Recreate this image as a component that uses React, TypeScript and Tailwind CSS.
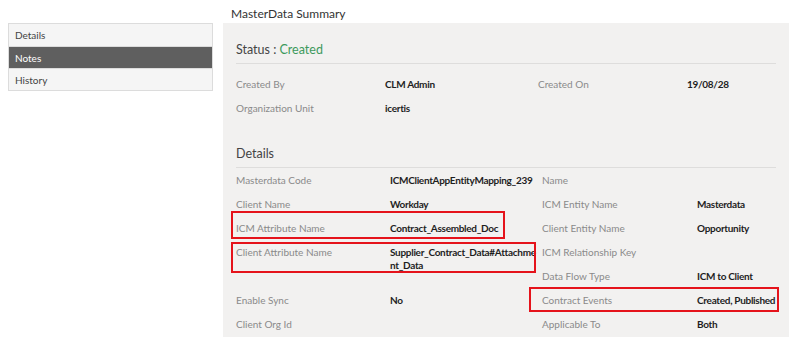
import React from "react";

type Field = { label: string; value?: React.ReactNode };

const sideItems = [
  { name: "Details", active: false },
  { name: "Notes", active: true },
  { name: "History", active: false },
];

const statusLeft: Field[] = [
  { label: "Created By", value: "CLM Admin" },
  { label: "Organization Unit", value: "icertis" },
];
const statusRight: Field[] = [{ label: "Created On", value: "19/08/28" }];

const detailsRight: Field[] = [
  { label: "Name" },
  { label: "ICM Entity Name", value: "Masterdata" },
  { label: "Client Entity Name", value: "Opportunity" },
  { label: "ICM Relationship Key" },
  { label: "Data Flow Type", value: "ICM to Client" },
  { label: "Contract Events", value: "Created, Published" },
  { label: "Applicable To", value: "Both" },
];

function Row({ f, labelW, span }: { f: Field; labelW: string; span?: string }) {
  return (
    <div className={`flex items-start pt-[5px] ${span ?? ""}`}>
      <div className={`${labelW} shrink-0 whitespace-nowrap text-[#8a8a8a]`}>{f.label}</div>
      <div className="whitespace-nowrap pt-[1px] font-bold leading-[13px] tracking-[-0.3px] text-[#1e1e1e]">{f.value}</div>
    </div>
  );
}

export default function App() {
  return (
    <div
      className="relative flex h-[341px] w-[800px] overflow-hidden bg-white text-[10px] leading-[14px]"
      style={{ fontFamily: "Lato, 'Open Sans', sans-serif" }}
    >
      {/* left nav */}
      <div className="w-[223px] shrink-0 pl-2 pr-[10px] pt-[23px]">
        <div className="border border-[#dcdcdc] bg-[#f5f5f5]">
          {sideItems.map((s, i) => (
            <div
              key={s.name}
              className={`flex h-[22px] items-center px-[6px] ${i > 0 ? "border-t border-[#dcdcdc]" : ""} ${
                s.active ? "bg-[#5f5f5f] text-white" : "text-[#444]"
              }`}
            >
              {s.name}
            </div>
          ))}
        </div>
      </div>

      {/* main */}
      <div className="flex w-[566px] shrink-0 flex-col">
        <div className="h-[23px] pl-[8px] pt-[5px] text-[12px] leading-[18px] text-[#333]">MasterData Summary</div>
        <div className="relative h-[314px] bg-[#f2f1f0] px-[13px]">
          <div className="border-b border-[#dedddc] pb-[3px] pt-[17px] text-[12.5px] leading-[20px] text-[#444]">
            Status : <span className="text-[#3d9a5c]">Created</span>
          </div>
          <div className="mt-[8px] grid auto-rows-[24px] grid-cols-[302px_1fr]">
            <Row f={statusLeft[0]} labelW="w-[149px]" />
            <Row f={statusRight[0]} labelW="w-[149px]" />
            <Row f={statusLeft[1]} labelW="w-[149px]" />
          </div>

          <div className="mt-[24px] border-b border-[#dedddc] pb-[3px] text-[12.5px] leading-[20px] text-[#444]">Details</div>
          <div className="mt-0 grid grid-flow-col grid-cols-[306px_1fr] grid-rows-[repeat(7,24px)]">
            <Row f={{ label: "Masterdata Code", value: "ICMClientAppEntityMapping_239" }} labelW="w-[154px]" />
            <Row f={{ label: "Client Name", value: "Workday" }} labelW="w-[154px]" />
            <Row f={{ label: "ICM Attribute Name", value: "Contract_Assembled_Doc" }} labelW="w-[154px]" />
            <Row
              f={{
                label: "Client Attribute Name",
                value: (
                  <>
                    Supplier_Contract_Data#Attachme
                    <br />
                    nt_Data
                  </>
                ),
              }}
              labelW="w-[154px]"
              span="row-span-2"
            />
            <Row f={{ label: "Enable Sync", value: "No" }} labelW="w-[154px]" />
            <Row f={{ label: "Client Org Id" }} labelW="w-[154px]" />
            {detailsRight.map((f) => (
              <Row key={f.label} f={f} labelW="w-[155px]" />
            ))}
          </div>

          {/* red annotation boxes */}
          <div className="pointer-events-none absolute left-[8px] top-[188px] h-[28px] w-[274px] border-2 border-[#e5131b]" />
          <div className="pointer-events-none absolute left-[8px] top-[219px] h-[31px] w-[305px] border-2 border-[#e5131b]" />
          <div className="pointer-events-none absolute left-[306px] top-[264px] h-[25px] w-[250px] border-2 border-[#e5131b]" />
        </div>
      </div>
    </div>
  );
}
